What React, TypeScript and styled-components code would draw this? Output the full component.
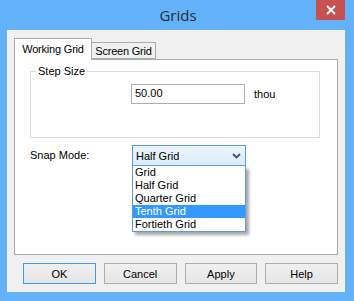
import styled, { createGlobalStyle } from "styled-components";

const GlobalStyle = createGlobalStyle`
    html, body {
        margin: 0;
        padding: 0;
        background: #63b1f9;
    }
    * {
        box-sizing: border-box;
    }
`;

const snapModes = ["Grid", "Half Grid", "Quarter Grid", "Tenth Grid", "Fortieth Grid"];
const buttons = ["OK", "Cancel", "Apply", "Help"];

function App() {
    return (
        <>
            <GlobalStyle />
            <Window>
                <TitleBar>
                    <Title>Grids</Title>
                    <CloseButton>
                        <svg width="10" height="10" viewBox="0 0 10 10">
                            <path d="M1 1 L9 9 M9 1 L1 9" stroke="#fff" strokeWidth="2" />
                        </svg>
                    </CloseButton>
                </TitleBar>
                <Client>
                    <TabStrip>
                        <Tab $active $width={78}>Working Grid</Tab>
                        <Tab $width={64}>Screen Grid</Tab>
                    </TabStrip>
                    <TabPanel>
                        <GroupBox>
                            <legend>Step Size</legend>
                            <FieldRow>
                                <TextInput>50.00</TextInput>
                                <Unit>thou</Unit>
                            </FieldRow>
                        </GroupBox>
                        <SnapRow>
                            <Label>Snap Mode:</Label>
                            <ComboWrap>
                                <Combo>
                                    <span>Half Grid</span>
                                    <svg width="9" height="6" viewBox="0 0 9 6">
                                        <path d="M1 1 L4.5 4.5 L8 1" stroke="#505050" strokeWidth="1.8" fill="none" />
                                    </svg>
                                </Combo>
                                <DropList>
                                    {snapModes.map((mode) => (
                                        <DropItem key={mode} $selected={mode === "Tenth Grid"}>
                                            {mode}
                                        </DropItem>
                                    ))}
                                </DropList>
                            </ComboWrap>
                        </SnapRow>
                    </TabPanel>
                    <ButtonRow>
                        {buttons.map((b) => (
                            <Button key={b} $default={b === "OK"}>
                                {b}
                            </Button>
                        ))}
                    </ButtonRow>
                </Client>
            </Window>
        </>
    );
}

const Window = styled.div`
    width: 354px;
    height: 301px;
    background: #63b1f9;
    display: flex;
    flex-direction: column;
    font-family: "Liberation Sans", Arial, sans-serif;
    font-size: 11px;
    color: #000;
`;

const TitleBar = styled.div`
    height: 30px;
    display: flex;
    justify-content: center;
    position: relative;
`;

const Title = styled.div`
    font-family: "Open Sans", "Noto Sans", sans-serif;
    font-size: 15px;
    color: #2b2b2b;
    line-height: 30px;
    padding-left: 2px;
`;

const CloseButton = styled.div`
    position: absolute;
    top: 0;
    right: 9px;
    width: 29px;
    height: 20px;
    background: #c75050;
    display: flex;
    align-items: center;
    justify-content: center;
`;

const Client = styled.div`
    margin: 0 9px 9px 7px;
    flex: 1;
    background: #f0f0f0;
    padding: 8px 7px 0 7px;
    display: flex;
    flex-direction: column;
`;

const TabStrip = styled.div`
    display: flex;
    align-items: flex-end;
    height: 21px;
`;

const Tab = styled.div<{ $active?: boolean; $width: number }>`
    width: ${(p) => p.$width}px;
    height: ${(p) => (p.$active ? "22px" : "17px")};
    margin-bottom: ${(p) => (p.$active ? "-1px" : "0")};
    padding-top: ${(p) => (p.$active ? "4px" : "2px")};
    text-align: center;
    border: 1px solid #acacac;
    border-bottom: ${(p) => (p.$active ? "none" : "1px solid #acacac")};
    border-left: ${(p) => (p.$active ? "1px solid #acacac" : "none")};
    background: ${(p) => (p.$active ? "#fff" : "#f0f0f0")};
    position: relative;
    z-index: ${(p) => (p.$active ? 1 : 0)};
    white-space: nowrap;
    letter-spacing: -0.2px;
`;

const TabPanel = styled.div`
    height: 196px;
    width: 324px;
    background: #fff;
    border: 1px solid #acacac;
    padding: 5px 17px 0 15px;
    display: flex;
    flex-direction: column;
`;

const GroupBox = styled.fieldset`
    margin: 0;
    padding: 6px 0 0 0;
    height: 73px;
    border: 1px solid #dcdcdc;

    legend {
        padding: 0 2px;
        margin-left: 5px;
        line-height: 13px;
    }
`;

const FieldRow = styled.div`
    display: flex;
    align-items: center;
    gap: 9px;
    padding-left: 100px;
`;

const TextInput = styled.div`
    width: 114px;
    height: 20px;
    border: 1px solid #adadad;
    background: #fff;
    padding: 2px 0 0 3px;
    font-size: 11px;
`;

const Unit = styled.span`
    color: #000;
`;

const SnapRow = styled.div`
    display: flex;
    align-items: flex-start;
    margin-top: 7px;
`;

const Label = styled.div`
    width: 102px;
    padding-top: 4px;
    padding-left: 0px;
    color: #000;
`;

const ComboWrap = styled.div`
    position: relative;
    width: 114px;
`;

const Combo = styled.div`
    height: 21px;
    border: 1px solid #569de5;
    background: linear-gradient(#ecf4fc, #dcecfc);
    display: flex;
    align-items: center;
    justify-content: space-between;
    padding: 0 4px 0 3px;
`;

const DropList = styled.div`
    position: absolute;
    top: 21px;
    left: 0;
    width: 114px;
    border: 1px solid #569de5;
    border-top: none;
    background: #fff;
    box-shadow: 3px 3px 3px rgba(0, 0, 0, 0.35);
    z-index: 2;
`;

const DropItem = styled.div<{ $selected?: boolean }>`
    height: 13px;
    line-height: 13px;
    padding-left: 2px;
    background: ${(p) => (p.$selected ? "#3399ff" : "transparent")};
    color: ${(p) => (p.$selected ? "#fff" : "#000")};
`;

const ButtonRow = styled.div`
    display: flex;
    gap: 8px;
    margin-top: 8px;
    padding-left: 9px;
`;

const Button = styled.div<{ $default?: boolean }>`
    width: 73px;
    height: 21px;
    border: 1px solid ${(p) => (p.$default ? "#3c9af0" : "#adadad")};
    background: linear-gradient(#f0f0f0, #e5e5e5);
    display: flex;
    align-items: center;
    justify-content: center;
`;

export default App;
